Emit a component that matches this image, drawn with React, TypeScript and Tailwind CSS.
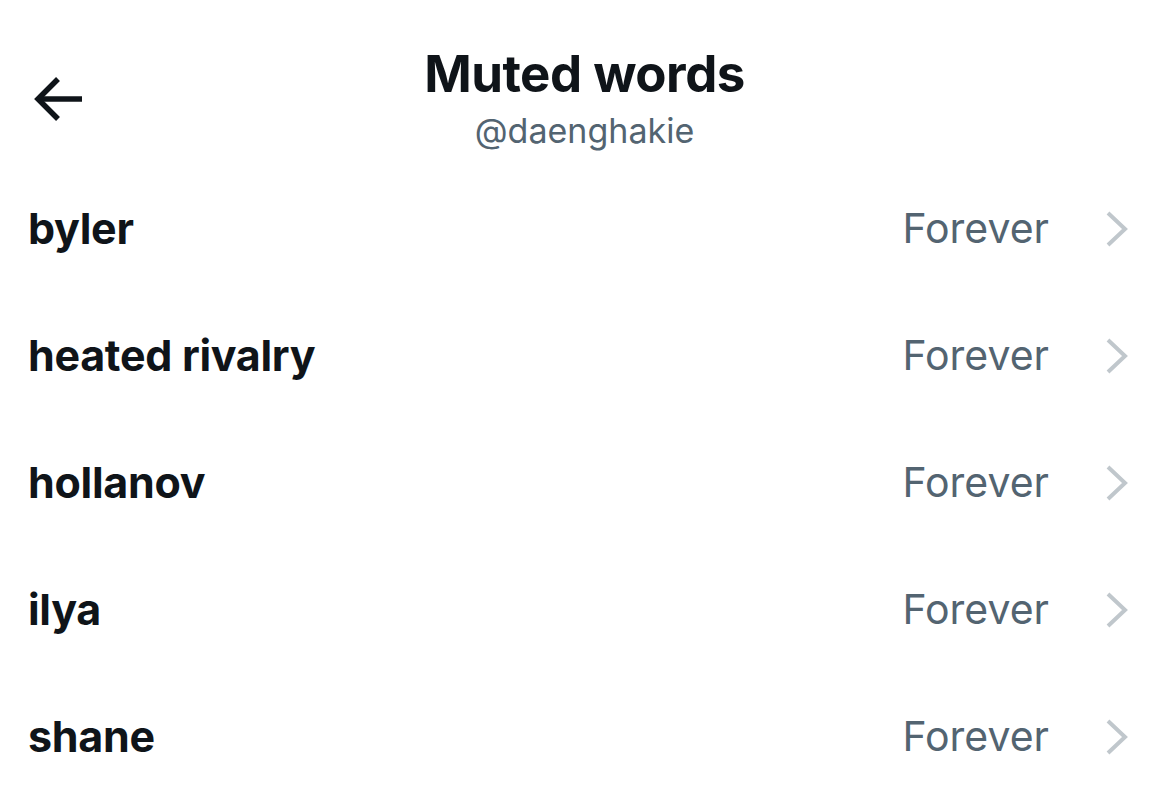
const words = ['byler', 'heated rivalry', 'hollanov', 'ilya', 'shane']

function BackArrow() {
  return (
    <svg width="52" height="46" viewBox="0 0 52 46" fill="none" stroke="#0f1419" strokeWidth="5.5" strokeLinecap="butt">
      <path d="M49 23H5" />
      <path d="M25 3L5 23l20 20" />
    </svg>
  )
}

function Chevron() {
  return (
    <svg width="24" height="38" viewBox="0 0 24 38" fill="none" stroke="#c0c7cc" strokeWidth="4">
      <path d="M3 3l17 16L3 35" />
    </svg>
  )
}

export default function App() {
  return (
    <div className="w-[1169px] h-[800px] bg-white overflow-hidden font-['Inter',sans-serif] text-[#0f1419]">
      <header className="relative h-[165px] flex flex-col items-center pt-[43px]">
        <button className="absolute left-[33px] top-[76px]">
          <BackArrow />
        </button>
        <h1 className="text-[51px] leading-[62px] font-bold tracking-[-0.5px]">Muted words</h1>
        <p className="text-[34px] leading-[40px] text-[#536471] mt-[6px]">@daenghakie</p>
      </header>
      <ul>
        {words.map((w) => (
          <li key={w} className="h-[127px] flex items-center pl-[28px] pr-[40px]">
            <span className="flex-1 text-[43px] font-bold tracking-[-0.3px]">{w}</span>
            <span className="text-[41px] text-[#536471] mr-[56px]">Forever</span>
            <Chevron />
          </li>
        ))}
      </ul>
    </div>
  )
}
